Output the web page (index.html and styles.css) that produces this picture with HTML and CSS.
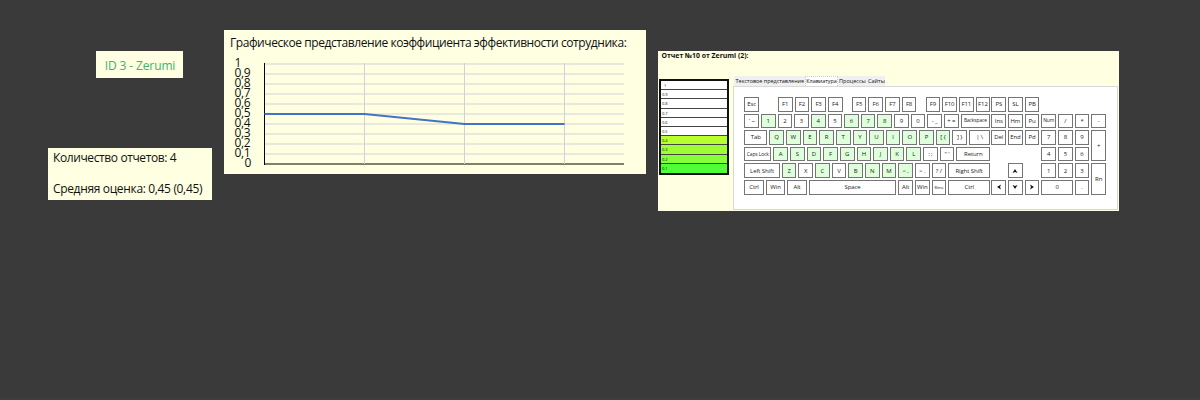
FILE: index.html
```html
<!DOCTYPE html>
<html lang="ru">
<head>
<meta charset="utf-8">
<title>Zerumi</title>
<link rel="stylesheet" href="styles.css">
</head>
<body>
<main class="board">
  <section class="summary">
    <div class="user">ID 3 - Zerumi</div>
    <div class="stats"><p class="count">Количество отчетов: 4</p><p class="mean">Средняя оценка: 0,45 (0,45)</p></div>
  </section>
  <section class="chart">
    <h1>Графическое представление коэффициента эффективности сотрудника:</h1>
    <div class="plot">
      <div class="scale"><span class="one">1</span><span>0,9</span><span>0,8</span><span>0,7</span><span>0,6</span><span>0,5</span><span>0,4</span><span>0,3</span><span>0,2</span><span>0,1</span><span class="zero">0</span></div>
      <svg class="graph" width="361" height="102" viewBox="0 0 361 102">
        <path d="M1 1H360M1 11H360M1 21H360M1 31H360M1 41H360M1 51H360M1 61H360M1 71H360M1 81H360M1 91H360" stroke="#e8e8dc" stroke-width="2"/>
        <path d="M0 101H360" stroke="#80806f" stroke-width="2"/>
        <path d="M100.5 0V101M200.5 0V101M300.5 0V101" stroke="#d0d0d6"/>
        <path d="M.5 0V102" stroke="#000"/>
        <path d="M.5 51H100.5L200.5 61H300.5" fill="none" stroke="#4472c4" stroke-width="2"/>
      </svg>
    </div>
  </section>
  <section class="report">
    <h2>Отчет №10 от Zerumi (2):</h2>
    <div class="report-body">
      <div class="levels"><div class="first">1</div><div>0.9</div><div>0.8</div><div>0.7</div><div>0.6</div><div>0.5</div><div class="l4">0.4</div><div class="l3">0.3</div><div class="l2">0.2</div><div class="l1">0.1</div></div>
      <div class="view">
        <nav class="tabs"><span class="t1">Текстовое представление</span><span class="t2">Клавиатура</span><span class="t3">Процессы</span><span class="t4">Сайты</span></nav>
        <div class="panel">
          <div class="keys">
            <div class="row"><b>Esc</b><i class="g17"></i><b>F1</b><b>F2</b><b>F3</b><b>F4</b><i class="g7"></i><b>F5</b><b>F6</b><b>F7</b><b>F8</b><i class="g7"></i><b>F9</b><b>F10</b><b>F11</b><b>F12</b></div>
            <div class="row"><b>` ~</b><b class="on">1</b><b>2</b><b>3</b><b class="on">4</b><b>5</b><b class="on">6</b><b class="on">7</b><b class="on">8</b><b>9</b><b>0</b><b>- _</b><b>+ =</b><b class="fill small">Backspace</b></div>
            <div class="row"><b class="tab">Tab</b><b class="on">Q</b><b class="on">W</b><b class="on">E</b><b class="on">R</b><b class="on">T</b><b class="on">Y</b><b class="on">U</b><b class="on">I</b><b class="on">O</b><b class="on">P</b><b class="on">[ {</b><b>] }</b><b class="fill">| \</b></div>
            <div class="row"><b class="caps small">Caps Lock</b><b class="on">A</b><b class="on">S</b><b class="on">D</b><b class="on">F</b><b class="on">G</b><b class="on">H</b><b class="on">J</b><b class="on">K</b><b class="on">L</b><b>: ;</b><b>" '</b><b class="fill">Return</b></div>
            <div class="row"><b class="shift">Left Shift</b><b class="on">Z</b><b>X</b><b class="on">C</b><b>V</b><b class="on">B</b><b class="on">N</b><b class="on">M</b><b class="on">&lt; ,</b><b>&gt; .</b><b>? /</b><b class="fill">Right Shift</b></div>
            <div class="row"><b class="mod">Ctrl</b><b class="mod">Win</b><b class="mod">Alt</b><b class="fill">Space</b><b>Alt</b><b>Win</b><b class="tiny">Menu</b><b class="rctrl">Ctrl</b></div>
          </div>
          <div class="nav">
            <b>PS</b><b>SL</b><b>PB</b>
            <b>Ins</b><b>Hm</b><b>Pu</b>
            <b>Del</b><b>End</b><b>Pd</b>
            <b class="up"><svg viewBox="0 0 6 6"><path d="M3 1L5.5 5L3 4L.5 5Z"/></svg></b>
            <b class="left"><svg viewBox="0 0 6 6"><path d="M1 3L5 .5L4 3L5 5.5Z"/></svg></b>
            <b class="down"><svg viewBox="0 0 6 6"><path d="M3 5L5.5 1L3 2L.5 1Z"/></svg></b>
            <b class="right"><svg viewBox="0 0 6 6"><path d="M5 3L1 .5L2 3L1 5.5Z"/></svg></b>
          </div>
          <div class="pad">
            <b class="small">Num</b><b>/</b><b>*</b><b>-</b>
            <b>7</b><b>8</b><b>9</b><b class="tall">+</b>
            <b>4</b><b>5</b><b>6</b>
            <b>1</b><b>2</b><b>3</b><b class="tall">Rn</b>
            <b class="wide">0</b><b>.</b>
          </div>
        </div>
      </div>
    </div>
  </section>
</main>
</body>
</html>
```
FILE: styles.css
```css
* { box-sizing: border-box; }
body { margin: 0; background: #3a3a3a; color: #111; font-family: "Open Sans", "Noto Sans", sans-serif; }
p, h1, h2 { margin: 0; font-weight: 400; white-space: nowrap; }
.board { display: flex; align-items: flex-start; height: 400px; padding: 30px 0 0 48px; border-bottom: 2px solid #403b3e; }
.summary { width: 164px; margin: 21px 12px 0 0; }
.user { width: 87px; height: 27px; margin: 0 0 70px 48px; padding-left: 1px; background: #ffffe1; color: #3cb371; font-size: 12px; line-height: 29px; letter-spacing: -0.12px; text-align: center; white-space: nowrap; }
.stats { height: 52px; padding: 1px 0 0 5px; background: #ffffe1; font-size: 12px; line-height: 17px; }
.count { letter-spacing: -0.39px; }
.mean { margin-top: 14px; letter-spacing: -0.34px; }
.chart { width: 422px; height: 144px; margin-right: 12px; padding: 4px 0 0 5px; background: #ffffe1; }
.chart h1 { padding-left: 1px; font-size: 12px; line-height: 18px; letter-spacing: -0.43px; }
.plot { display: flex; margin-top: 11px; }
.scale { display: flex; flex-direction: column; width: 35px; margin-top: -6px; padding-left: 5.5px; font-size: 12px; letter-spacing: -0.4px; }
.scale span { height: 10px; line-height: 12px; }
.scale .zero { padding-left: 10px; }
.graph { display: block; }
.report { width: 461px; height: 160px; margin-top: 21px; background: #ffffe1; }
.report h2 { height: 25px; padding-left: 3.5px; font-size: 6.9px; line-height: 10px; font-weight: 700; }
.report-body { display: flex; }
.levels { display: grid; grid-template-rows: repeat(10, minmax(0, 1fr)); width: 70px; height: 96px; margin: 3px 4px 0 1px; border: 2px solid #111; background: #fff; font-size: 4px; line-height: 10px; }
.levels div { padding-left: 1px; border-bottom: 1px solid #444; }
.levels div:last-child { border-bottom: 0; }
.levels .first { padding-left: 3px; }
.levels .l4 { background: #b8ff30; }
.levels .l3 { background: #9cff34; }
.levels .l2 { background: #84ff38; }
.levels .l1 { background: #50ff38; }
.tabs { display: flex; width: 151px; height: 10px; margin-left: 1px; background: #f0f0f0; font-size: 5.5px; line-height: 10px; white-space: nowrap; }
.tabs span { padding-left: 1.6px; }
.t1 { width: 71px; letter-spacing: -0.03px; }
.t2 { width: 32.5px; background: #fff; border: 1px dotted #ccc; border-width: 1px 1px 0; line-height: 9px; letter-spacing: -0.05px; }
.tabs .t2 { padding-left: 0.3px; }
.t3 { width: 29px; }
.panel { display: flex; gap: 2px; width: 385px; height: 124px; padding: 10px 0 0 10.3px; border: 1px solid #d8d8d8; background: #fff; }
.keys { display: grid; grid-template-rows: repeat(6, 14.6px); gap: 2px; width: 245.2px; }
.row { display: flex; gap: 2px; }
b { display: flex; align-items: center; justify-content: center; flex: none; width: 14.65px; height: 100%; border: 1px solid #757575; background: #fff; color: #222; font-size: 6px; font-weight: 400; line-height: 1; letter-spacing: -0.1px; white-space: nowrap; }
b.on { background: #dfffdc; }
i.g17 { width: 15px; }
i.g7 { width: 5.3px; }
b.small { font-size: 4.9px; }
b.tiny { font-size: 3.4px; }
b.fill { flex: 1; }
b.tab { width: 23px; }
b.caps { width: 27px; }
b.shift { width: 35.5px; }
b.mod { width: 19.5px; }
b.rctrl { width: 42px; }
.nav { display: grid; grid-template-columns: repeat(3, 14.65px); grid-template-rows: repeat(6, 14.6px); gap: 2px; }
.nav .up { grid-column: 2; grid-row: 5; }
.nav .left { grid-column: 1; grid-row: 6; }
.nav .down { grid-column: 2; grid-row: 6; }
.nav .right { grid-column: 3; grid-row: 6; }
.nav svg { width: 6px; height: 6px; fill: #111; }
.pad { display: grid; grid-template-columns: repeat(4, 14.65px); grid-template-rows: repeat(5, 14.6px); gap: 2px; margin-top: 16.6px; }
.pad .tall { grid-row: span 2; }
.pad .wide { grid-column: span 2; width: 31.3px; }
```
